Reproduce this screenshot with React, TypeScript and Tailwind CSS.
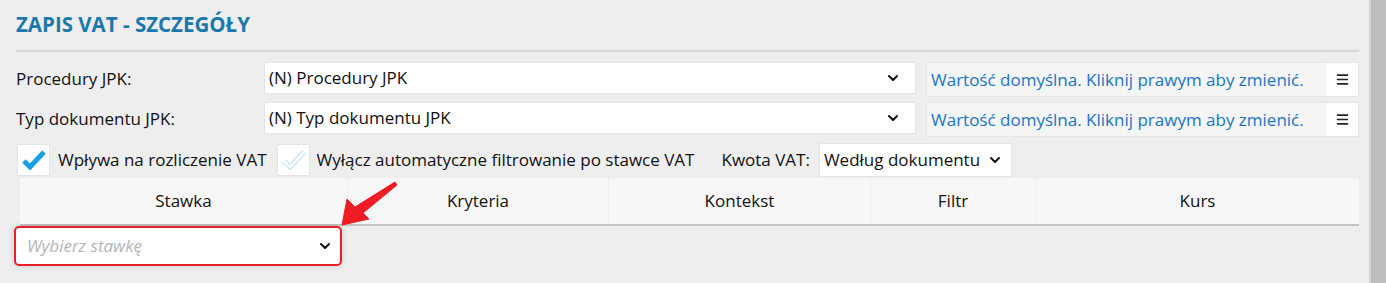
import { ChevronDown, Menu } from 'lucide-react';

const font = { fontFamily: '"Open Sans", "Noto Sans", sans-serif' };

const Select = ({ value, width }: { value: string; width: string }) => (
  <div
    className={`${width} h-[32px] bg-white border border-[#e4e4e4] flex items-center pl-[4px] pr-[14px] text-[17px] text-[#111]`}
  >
    <span className="flex-1 truncate">{value}</span>
    <ChevronDown size={16} strokeWidth={3} className="text-[#111]" />
  </div>
);

const InfoBox = () => (
  <div className="flex-1 h-[35px] border border-[#e6e6e6] bg-white flex">
    <div className="flex-1 bg-[#f5f5f5] flex items-center pl-[4px] text-[17px] text-[#1b74c5]">
      Wartość domyślna. Kliknij prawym aby zmienić.
    </div>
    <div className="w-[32px] flex items-center justify-center">
      <Menu size={15} strokeWidth={2.5} className="text-[#222]" />
    </div>
  </div>
);

const Row = ({ label, value }: { label: string; value: string }) => (
  <div className="flex items-start h-[40px]">
    <div className="w-[248px] h-[34px] flex items-center text-[17px] text-[#111]">{label}</div>
    <Select value={value} width="w-[652px]" />
    <div className="w-[10px]" />
    <InfoBox />
  </div>
);

const CheckBox = ({ faded }: { faded?: boolean }) => (
  <div className="w-[33px] h-[32px] bg-white border border-[#e4e4e4]">
    {faded ? (
      <svg width="31" height="30" viewBox="0 0 31 30">
        <path d="M6 16 L12 22 L26 7" fill="none" stroke="#c4e4f5" strokeWidth="5" />
        <path d="M6 16 L12 22 L26 7" fill="none" stroke="#fff" strokeWidth="2.5" />
      </svg>
    ) : (
      <svg width="31" height="30" viewBox="0 0 31 30">
        <path d="M6 16 L12 22 L26 7" fill="none" stroke="#1a9fe3" strokeWidth="5" />
      </svg>
    )}
  </div>
);

const columns = [
  { name: 'Stawka', w: 'w-[327px]' },
  { name: 'Kryteria', w: 'w-[260px]' },
  { name: 'Kontekst', w: 'w-[261px]' },
  { name: 'Filtr', w: 'w-[164px]' },
  { name: 'Kurs', w: 'flex-1' },
];

export default function App() {
  return (
    <div className="w-[1386px] h-[283px] bg-[#eeeeee] flex overflow-hidden" style={font}>
      <div className="flex-1 pl-[16px] pr-[10px] relative">
        <h1 className="h-[50px] pt-[9px] text-[20.5px] font-bold text-[#1a78ad]">
          ZAPIS VAT - SZCZEGÓŁY
        </h1>
        <div className="h-[2px] bg-[#d8d8d8]" />
        <div className="pt-[10px]">
          <Row label="Procedury JPK:" value="(N) Procedury JPK" />
          <Row label="Typ dokumentu JPK:" value="(N) Typ dokumentu JPK" />
        </div>
        <div className="flex items-center h-[36px] pl-[1px] text-[17px] text-[#111]">
          <CheckBox />
          <span className="ml-[8px]">Wpływa na rozliczenie VAT</span>
          <div className="ml-[10px]">
            <CheckBox faded />
          </div>
          <span className="ml-[7px]">Wyłącz automatyczne filtrowanie po stawce VAT</span>
          <span className="ml-[27px] mr-[9px]">Kwota VAT:</span>
          <div className="w-[193px] h-[34px] bg-white border border-[#e4e4e4] flex items-center pl-[4px] pr-[8px]">
            <span className="flex-1">Według dokumentu</span>
            <ChevronDown size={16} strokeWidth={3} />
          </div>
        </div>
        <div className="ml-[4px] flex h-[48px] border-b-2 border-[#c4c4c4] text-[17px] text-[#111]">
          {columns.map((c, i) => (
            <div
              key={c.name}
              className={`${c.w} bg-[#f7f7f7] flex items-center justify-center ${i > 0 ? 'ml-[1px]' : ''}`}
            >
              {c.name}
            </div>
          ))}
        </div>
        <div className="w-[328px] h-[40px] -ml-[2px] border-2 border-[#e8202a] rounded-[5px] bg-white flex items-center pl-[11px] pr-[7px] shadow-[0_0_6px_rgba(0,0,0,0.15)]">
          <span className="flex-1 italic text-[17px] text-[#b5b5b5]">Wybierz stawkę</span>
          <ChevronDown size={16} strokeWidth={3} className="text-[#111]" />
        </div>
        <svg
          className="absolute left-[326px] top-[180px]"
          width="80"
          height="52"
          viewBox="0 0 80 52"
        >
          <path
            d="M16 45 L21 19 L29 27 L69 2 L71 5 L37 33 L43 39 Z"
            fill="#ee1c24"
            stroke="#ee1c24"
            strokeWidth="1"
            strokeLinejoin="round"
          />
        </svg>
      </div>
      <div className="w-[17px] bg-[#bdbdbd] border-l-2 border-[#d4d4d4]" />
    </div>
  );
}
